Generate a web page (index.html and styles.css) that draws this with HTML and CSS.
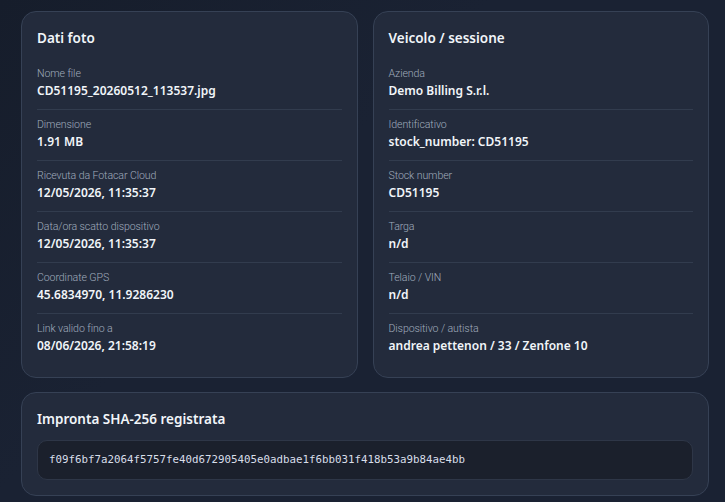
FILE: index.html
```html
<!DOCTYPE html>
<html lang="it">
<head>
    <meta charset="UTF-8">
    <meta name="viewport" content="width=device-width, initial-scale=1.0">
    <title>Dettaglio foto</title>
    <link rel="stylesheet" href="styles.css">
</head>
<body>
    <div class="page">
        <div class="grid">
            <div class="card">
                <h2>Dati foto</h2>
                <div class="row">
                    <div class="label">Nome file</div>
                    <div class="value">CD51195_20260512_113537.jpg</div>
                </div>
                <div class="row">
                    <div class="label">Dimensione</div>
                    <div class="value">1.91 MB</div>
                </div>
                <div class="row">
                    <div class="label">Ricevuta da Fotacar Cloud</div>
                    <div class="value">12/05/2026, 11:35:37</div>
                </div>
                <div class="row">
                    <div class="label">Data/ora scatto dispositivo</div>
                    <div class="value">12/05/2026, 11:35:37</div>
                </div>
                <div class="row">
                    <div class="label">Coordinate GPS</div>
                    <div class="value">45.6834970, 11.9286230</div>
                </div>
                <div class="row">
                    <div class="label">Link valido fino a</div>
                    <div class="value">08/06/2026, 21:58:19</div>
                </div>
            </div>

            <div class="card">
                <h2>Veicolo / sessione</h2>
                <div class="row">
                    <div class="label">Azienda</div>
                    <div class="value">Demo Billing S.r.l.</div>
                </div>
                <div class="row">
                    <div class="label">Identificativo</div>
                    <div class="value">stock_number: CD51195</div>
                </div>
                <div class="row">
                    <div class="label">Stock number</div>
                    <div class="value">CD51195</div>
                </div>
                <div class="row">
                    <div class="label">Targa</div>
                    <div class="value">n/d</div>
                </div>
                <div class="row">
                    <div class="label">Telaio / VIN</div>
                    <div class="value">n/d</div>
                </div>
                <div class="row">
                    <div class="label">Dispositivo / autista</div>
                    <div class="value">andrea pettenon / 33 / Zenfone 10</div>
                </div>
            </div>
        </div>

        <div class="card hash-card">
            <h2>Impronta SHA-256 registrata</h2>
            <div class="hash">f09f6bf7a2064f5757fe40d672905405e0adbae1f6bb031f418b53a9b84ae4bb</div>
        </div>
    </div>
</body>
</html>
```

FILE: styles.css
```css
body {
    margin: 0;
    background: linear-gradient(135deg, #161d2b 0%, #1a2233 40%, #1a2233 100%);
    font-family: "Noto Sans", "DejaVu Sans", sans-serif;
    color: #f1f5f9;
    min-height: 502px;
}
.page {
    padding: 11px 16px 0 21px;
}
.grid {
    display: grid;
    grid-template-columns: 1fr 1fr;
    gap: 15px;
}
.card {
    background-color: #232b3c;
    border: 1px solid #364155;
    border-radius: 15px;
    padding: 16px 15px 13px 15px;
}
.card h2 {
    margin: 0 0 11px 0;
    font-size: 13.5px;
    font-weight: 600;
    line-height: 20px;
}
.row {
    padding: 7px 0 10px 0;
    border-bottom: 1px solid #323c4e;
}
.row:last-child {
    border-bottom: none;
}
.label {
    font-family: Roboto, "Noto Sans", sans-serif;
    font-size: 10.6px;
    font-weight: 300;
    letter-spacing: -0.1px;
    line-height: 15px;
    color: #a0abbd;
}
.value {
    font-size: 12px;
    font-weight: 600;
    line-height: 17px;
    margin-top: 1px;
}
.hash-card {
    margin-top: 14px;
    padding-bottom: 15px;
}
.hash {
    background-color: #1b202c;
    border: 1px solid #2e3647;
    border-radius: 10px;
    padding: 11px 11px;
    font-family: "DejaVu Sans Mono", monospace;
    font-size: 10.8px;
    line-height: 16px;
    color: #d8dee9;
}
```
